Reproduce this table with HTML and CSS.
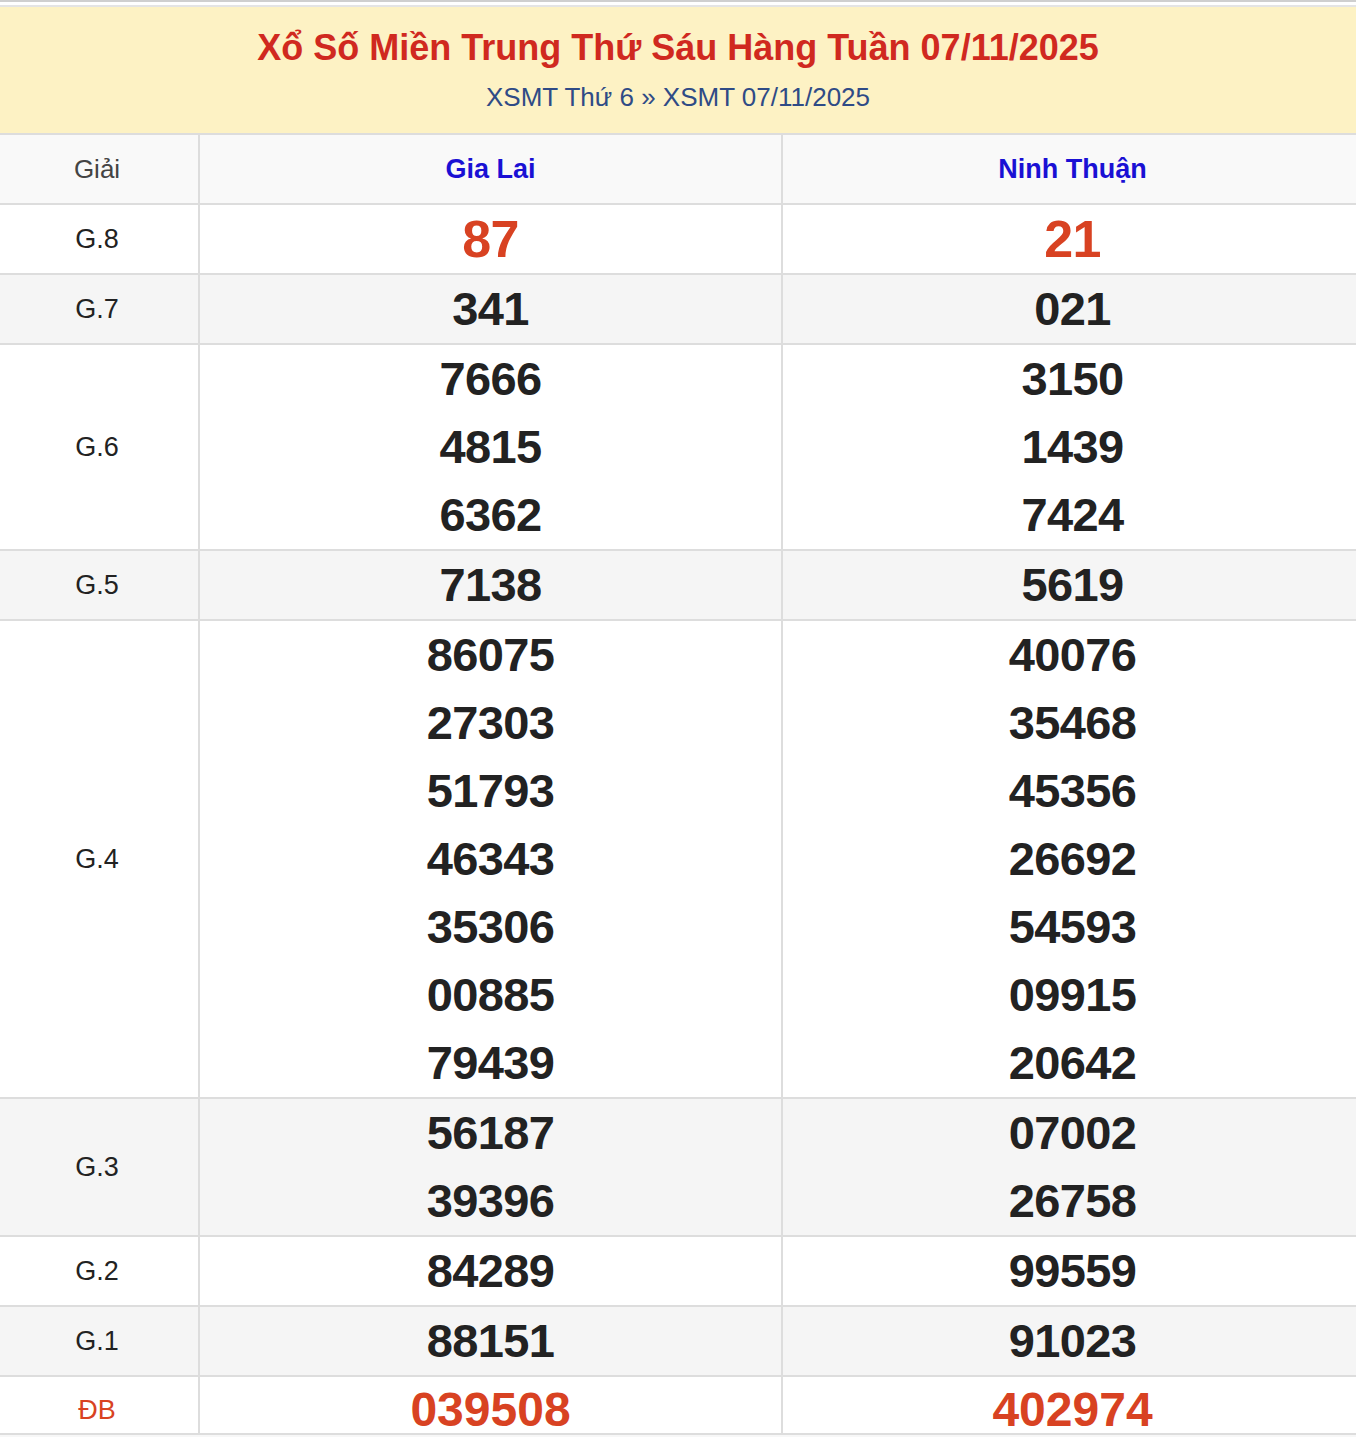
FILE: index.html
```html
<!DOCTYPE html>
<html lang="vi">
<head>
<meta charset="utf-8">
<title>XSMT 07/11/2025</title>
<link rel="stylesheet" href="styles.css">
</head>
<body>
<div class="page">
  <div class="top-rule"></div>
  <div class="head">
    <h1 class="title">Xổ Số Miền Trung Thứ Sáu Hàng Tuần 07/11/2025</h1>
    <div class="crumbs"><a href="#">XSMT Thứ 6</a> <span class="sep">»</span> <a href="#">XSMT 07/11/2025</a></div>
  </div>
  <table class="kq">
    <colgroup><col class="c-label"><col class="c-prov"><col></colgroup>
    <thead>
      <tr><th class="lbl">Giải</th><th class="prov">Gia Lai</th><th class="prov">Ninh Thuận</th></tr>
    </thead>
    <tbody>
      <tr><td class="lbl">G.8</td><td class="num big red">87</td><td class="num big red">21</td></tr>
      <tr class="alt"><td class="lbl">G.7</td><td class="num">341</td><td class="num">021</td></tr>
      <tr><td class="lbl">G.6</td><td class="num">7666<br>4815<br>6362</td><td class="num">3150<br>1439<br>7424</td></tr>
      <tr class="alt"><td class="lbl">G.5</td><td class="num">7138</td><td class="num">5619</td></tr>
      <tr><td class="lbl">G.4</td><td class="num">86075<br>27303<br>51793<br>46343<br>35306<br>00885<br>79439</td><td class="num">40076<br>35468<br>45356<br>26692<br>54593<br>09915<br>20642</td></tr>
      <tr class="alt"><td class="lbl">G.3</td><td class="num">56187<br>39396</td><td class="num">07002<br>26758</td></tr>
      <tr><td class="lbl">G.2</td><td class="num">84289</td><td class="num">99559</td></tr>
      <tr class="alt"><td class="lbl">G.1</td><td class="num">88151</td><td class="num">91023</td></tr>
      <tr class="db"><td class="lbl red">ĐB</td><td class="num red">039508</td><td class="num red">402974</td></tr>
    </tbody>
  </table>
  <div class="foot"></div>
</div>
</body>
</html>
```

FILE: styles.css
```css
html, body {
  margin: 0;
  padding: 0;
  background: #ffffff;
}
body {
  font-family: "Liberation Sans", Arial, Helvetica, sans-serif;
  color: #222222;
}
.page {
  width: 1356px;
}
.top-rule {
  height: 2px;
  background: #cfcfcf;
  border-bottom: 3px solid #ffffff;
}
.head {
  border-top: 2px solid #e4e4e4;
  background: #fdf2c4;
  height: 130px;
  border-bottom: 2px solid #dddddd;
  box-sizing: border-box;
  text-align: center;
  padding-top: 21px;
}
.title {
  margin: 0;
  font-size: 36px;
  line-height: 40px;
  font-weight: bold;
  color: #d0291f;
}
.crumbs {
  margin-top: 14px;
  font-size: 26px;
  line-height: 30px;
  color: #2f4b86;
}
.crumbs a {
  color: #2f4b86;
  text-decoration: none;
}
.kq {
  width: 1356px;
  border-collapse: collapse;
  table-layout: fixed;
}
.c-label { width: 199px; }
.c-prov { width: 583px; }
.kq th, .kq td {
  padding: 0;
  text-align: center;
  vertical-align: middle;
  border-bottom: 2px solid #dddddd;
  border-left: 2px solid #dddddd;
}
.kq th:first-child, .kq td:first-child {
  border-left: none;
  padding-right: 4px;
}
.kq th:last-child, .kq td:last-child {
  padding-left: 6px;
}
.kq thead tr {
  background: #f9f9f9;
}
.kq th {
  height: 68px;
}
.kq th.lbl {
  font-weight: normal;
  font-size: 26px;
  color: #444444;
}
.kq th.prov {
  font-size: 27px;
  font-weight: bold;
  color: #1a10d4;
}
.kq td.lbl {
  font-size: 27px;
  color: #222222;
}
.kq td.num {
  font-size: 47px;
  line-height: 68px;
  font-weight: bold;
  letter-spacing: -0.6px;
  color: #222222;
}
.kq td.num.big {
  font-size: 52px;
}
.kq td.lbl.red,
.kq td.num.red {
  color: #d84222;
}
.kq tr.alt {
  background: #f5f5f5;
}
.kq tr.db td {
  box-sizing: border-box;
  height: 58px;
  padding-top: 10px;
  line-height: 46px;
  vertical-align: top;
}
.kq tr.db td.num {
  font-size: 48px;
  letter-spacing: 0;
}
.foot {
  height: 2px;
  background: #f7f7f7;
}
```
